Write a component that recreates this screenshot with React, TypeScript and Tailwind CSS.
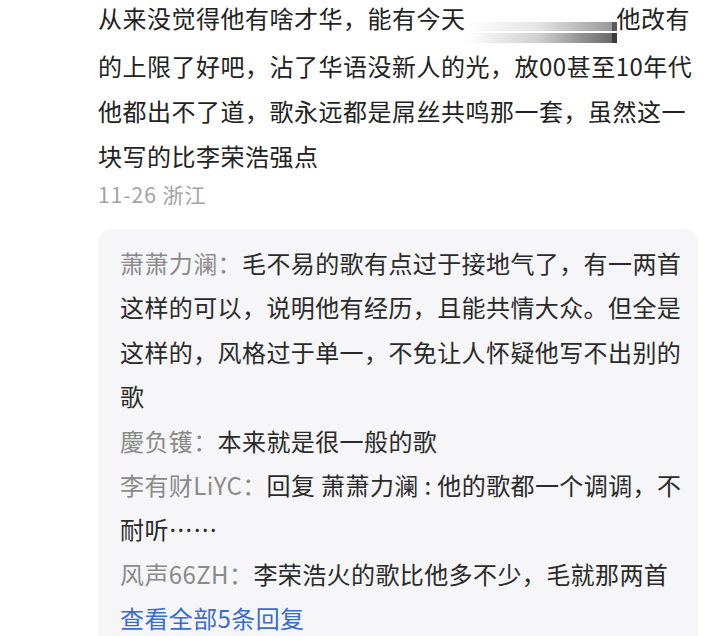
import React from "react";

const font = { fontFamily: '"Noto Sans CJK SC", "Noto Sans", sans-serif' };

type Reply = { name: string; text: React.ReactNode };

const replies: Reply[] = [
  { name: "萧萧力澜", text: "毛不易的歌有点过于接地气了，有一两首这样的可以，说明他有经历，且能共情大众。但全是这样的，风格过于单一，不免让人怀疑他写不出别的歌" },
  { name: "慶负镬", text: "本来就是很一般的歌" },
  { name: "李有财LiYC", text: <>回复 萧萧力澜 : 他的歌都一个调调，不耐听……</> },
  { name: "风声66ZH", text: "李荣浩火的歌比他多不少，毛就那两首" },
];

function Redacted() {
  return (
    <span className="inline-flex flex-col w-[151px] h-[21px] align-[-3px] gap-[2px]">
      <span className="h-[9px] w-full bg-gradient-to-r from-white via-[#e4e4e4] to-[#9a9a9a] border-r-[5px] border-[#5a5a5a]" />
      <span className="h-[10px] w-full bg-gradient-to-r from-white via-[#cfcfcf] to-[#6a6a6a] border-r-[5px] border-[#3a3a3a]" />
    </span>
  );
}

export default function App() {
  return (
    <div className="w-[720px] h-[636px] bg-white overflow-hidden" style={font}>
      <div className="pl-[98px]">
        {/* main comment */}
        <p className="w-[608px] mt-[-5px] text-[24px] leading-[45px] tracking-[0.5px] text-[#222]">
          从来没觉得他有啥才华，能有今天<Redacted />他改有的上限了好吧，沾了华语没新人的光，放00甚至10年代他都出不了道，歌永远都是屌丝共鸣那一套，虽然这一块写的比李荣浩强点
        </p>
        <div className="mt-[1px] text-[21px] leading-[30px] text-[#a3a3a3] tracking-[1px]">11-26 浙江</div>

        {/* replies */}
        <div className="mt-[20px] w-[600px] bg-[#f6f6f8] rounded-[14px] pl-[22px] pr-[12px] pt-[12px] pb-4">
          {replies.map((r) => (
            <p key={r.name} className="text-[24px] leading-[44.4px] tracking-[0.4px] text-[#2a2a2a]">
              <span className="text-[#8a8a8a]">{r.name}：</span>
              {r.text}
            </p>
          ))}
          <div className="text-[24px] leading-[44.4px] tracking-[0.4px] text-[#3a6ccf]">查看全部5条回复</div>
        </div>
      </div>
    </div>
  );
}
